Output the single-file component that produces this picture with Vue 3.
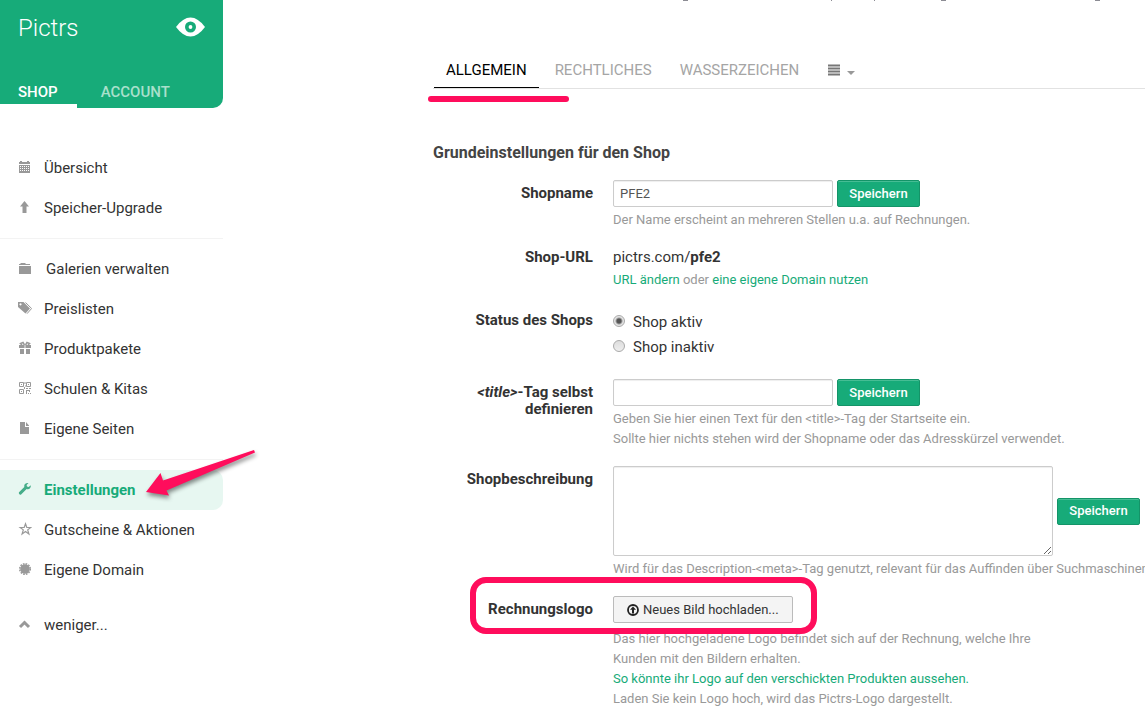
<script setup>
import { ref } from 'vue'

const groups = [
  [
    { icon: 'calendar', label: 'Übersicht' },
    { icon: 'up', label: 'Speicher-Upgrade' },
  ],
  [
    { icon: 'folder', label: 'Galerien verwalten', wide: true },
    { icon: 'tags', label: 'Preislisten' },
    { icon: 'gift', label: 'Produktpakete' },
    { icon: 'qr', label: 'Schulen & Kitas' },
    { icon: 'file', label: 'Eigene Seiten' },
  ],
  [
    { icon: 'wrench', label: 'Einstellungen', active: true },
    { icon: 'star', label: 'Gutscheine & Aktionen' },
    { icon: 'burst', label: 'Eigene Domain' },
  ],
]

const shopName = ref('PFE2')
const status = ref('aktiv')
const title = ref('')
const description = ref('')
</script>

<template>
  <div class="page">
    <aside class="sidebar">
      <header class="brand">
        <div class="brand-row">
          <a href="#" class="brand-name">Pictrs</a>
          <a href="#" class="brand-eye" aria-label="Shop ansehen">
            <svg width="30" height="20" viewBox="0 0 30 20">
              <path d="M0 10Q7 .5 14.500 .5T29 10Q22 19.500 14.500 19.500T0 10Z" fill="#fff" />
              <circle cx="14.500" cy="10" r="3.700" fill="none" stroke="#17ab79" stroke-width="3.600" />
            </svg>
          </a>
        </div>
        <nav class="brand-tabs">
          <a href="#" class="on">SHOP</a>
          <a href="#">ACCOUNT</a>
        </nav>
      </header>

      <nav class="menu">
        <ul v-for="(group, i) in groups" :key="i">
          <li v-for="item in group" :key="item.label">
            <a href="#" :class="{ active: item.active, wide: item.wide }">
              <svg class="icon" viewBox="0 0 14 14">
                <g v-if="item.icon === 'calendar'" fill="currentColor">
                  <path d="M1 2h1V1h2v1h5V1h2v1h1v2H1z" />
                  <path d="M1 5h11v8H1z" />
                  <path d="M2 6.500h9M2 8.500h9M2 10.500h9" stroke="#fff" stroke-dasharray="1 1" />
                </g>
                <path v-else-if="item.icon === 'up'" d="M6.500 1l4.500 5.500H8.500V13h-4V6.500H2z" fill="currentColor" />
                <g v-else-if="item.icon === 'folder'" fill="currentColor">
                  <path d="M2 3l1-1h4l1 1h4v1H1V3zM1 5h12v8H1z" />
                </g>
                <g v-else-if="item.icon === 'tags'">
                  <path d="M0 1h5.500L12 7.500 7.500 12.500 0 6zM2.500 2.200a1.100 1.100 0 1 0 .01 0z" fill="currentColor" fill-rule="evenodd" />
                  <path d="M7.500 1.500L13.600 7.500 9 12.700" fill="none" stroke="currentColor" />
                </g>
                <g v-else-if="item.icon === 'gift'">
                  <path d="M1 4h5v3H1zM8 4h5v3H8zM2 8h4v5H2zM8 8h4v5H8z" fill="currentColor" />
                  <path d="M6.500 4L5 1.500 2.500 2.500 4 4M7.500 4L9 1.500 11.500 2.500 10 4" fill="none" stroke="currentColor" stroke-width="1.500" />
                  <path d="M6 4h2v3H6z" fill="currentColor" opacity=".6" />
                </g>
                <g v-else-if="item.icon === 'qr'" fill="none" stroke="currentColor">
                  <path d="M1.500 1.500h4v4h-4zM8.500 1.500h4v4h-4zM1.500 8.500h4v4h-4z" />
                  <path d="M3 3.500h1M10 3.500h1M3 10.500h1M7 1v2M6.500 6v2M8 7.500h2M11 7.500h2M8 9.500h3M11.500 9v2M8.500 10v3M10 12.500h1M12 12.500h1M7 5h1" />
                </g>
                <g v-else-if="item.icon === 'file'" fill="currentColor">
                  <path d="M2 1h5v5h4v7H2z" /><path d="M8 1l3 3.500V5H8z" />
                </g>
                <path v-else-if="item.icon === 'wrench'" d="M12.700 3.200l-2 1.800-1.700-.5-.4-1.500 1.900-1.900C8.500.6 6.500 1.500 6.200 3.800L6.300 5 1 10.200c-.8 1 .9 3.200 2.100 2.200L8.600 7c2.600.8 4.700-1.200 4.100-3.800z" fill="currentColor" />
                <path v-else-if="item.icon === 'star'" d="M7.500 1.800l1.300 3.700h4L9.700 7.900l1.200 4L7.500 9.500l-3.400 2.400 1.200-4L2.200 5.500h4z" fill="none" stroke="currentColor" stroke-width="1.200" />
                <g v-else fill="currentColor">
                  <circle cx="7" cy="7" r="4.800" />
                  <circle cx="7" cy="7" r="5.300" fill="none" stroke="currentColor" stroke-width="1.500" stroke-dasharray="1.660 1.110" />
                </g>
              </svg>
              <span>{{ item.label }}</span>
            </a>
          </li>
        </ul>
        <button type="button" class="less">
          <svg class="icon" viewBox="0 0 14 14">
            <path d="M2 10L6.500 5.500 11 10" fill="none" stroke="currentColor" stroke-width="3" />
          </svg>
          <span>weniger...</span>
        </button>
      </nav>

      <svg class="arrow" width="120" height="60" viewBox="0 0 120 60" aria-hidden="true">
        <path d="M6 47L20.500 28 23 35.500 114 5 115 7.500 26.500 45.500 29 50.500Z" fill="#ff0d5c" />
      </svg>
    </aside>

    <main class="content">
      <svg class="cut-line" width="440" height="1" viewBox="0 0 440 1" aria-hidden="true">
        <path d="M10 .5h5M158 .5h1M201 .5h1M268 .5h5M422 .5h5" stroke="#8c8c94" />
      </svg>

      <nav class="tabs">
        <a href="#" class="on">ALLGEMEIN</a>
        <a href="#">RECHTLICHES</a>
        <a href="#">WASSERZEICHEN</a>
        <button type="button" class="more" aria-label="Weitere Bereiche">
          <svg width="28" height="14" viewBox="0 0 28 14">
            <path d="M0 2.500h12M0 5.500h12M0 8.500h12M0 11.500h12" stroke="#777" stroke-width="2" />
            <path d="M19 8h8l-4 4z" fill="#999" />
          </svg>
        </button>
        <i class="marker"></i>
      </nav>

      <form class="form" @submit.prevent>
        <h2>Grundeinstellungen für den Shop</h2>

        <div class="row">
          <label for="name">Shopname</label>
          <div>
            <div class="field">
              <input id="name" v-model="shopName" type="text">
              <button type="submit" class="save">Speichern</button>
            </div>
            <p class="help">Der Name erscheint an mehreren Stellen u.a. auf Rechnungen.</p>
          </div>
        </div>

        <div class="row url-row">
          <span class="label">Shop-URL</span>
          <div>
            <p class="url">pictrs.com/<b>pfe2</b></p>
            <p class="help"><a href="#">URL ändern</a> oder <a href="#">eine eigene Domain nutzen</a></p>
          </div>
        </div>

        <div class="row" role="radiogroup" aria-labelledby="status-label">
          <span id="status-label" class="label">Status des Shops</span>
          <div class="radios">
            <label><input v-model="status" type="radio" name="status" value="aktiv">Shop aktiv</label>
            <label><input v-model="status" type="radio" name="status" value="inaktiv">Shop inaktiv</label>
          </div>
        </div>

        <div class="row">
          <label for="title"><em>&lt;title&gt;</em>-Tag selbst definieren</label>
          <div>
            <div class="field">
              <input id="title" v-model="title" type="text">
              <button type="submit" class="save">Speichern</button>
            </div>
            <p class="help">
              Geben Sie hier einen Text für den &lt;title&gt;-Tag der Startseite ein.<br>
              Sollte hier nichts stehen wird der Shopname oder das Adresskürzel verwendet.
            </p>
          </div>
        </div>

        <div class="row">
          <label for="description">Shopbeschreibung</label>
          <div>
            <div class="field">
              <textarea id="description" v-model="description"></textarea>
              <button type="submit" class="save">Speichern</button>
            </div>
            <p class="help">Wird für das Description-&lt;meta&gt;-Tag genutzt, relevant für das Auffinden über Suchmaschinen, d</p>
          </div>
        </div>

        <div class="row logo-row">
          <span class="label">Rechnungslogo</span>
          <div>
            <button type="button" class="upload">
              <svg width="12" height="12" viewBox="0 0 12 12">
                <circle cx="6" cy="6" r="5" fill="none" stroke="#222" stroke-width="1.800" />
                <path d="M6 2.500l3 3.200H7V9.500H5V5.700H3z" fill="#222" />
              </svg>
              Neues Bild hochladen...
            </button>
            <p class="help">
              Das hier hochgeladene Logo befindet sich auf der Rechnung, welche Ihre<br>
              Kunden mit den Bildern erhalten.<br>
              <a href="#">So könnte ihr Logo auf den verschickten Produkten aussehen.</a><br>
              Laden Sie kein Logo hoch, wird das Pictrs-Logo dargestellt.
            </p>
          </div>
          <i class="frame"></i>
        </div>
      </form>
    </main>
  </div>
</template>

<style>
body {
  margin: 0;
  background: #fff;
}
</style>

<style scoped>
.page {
  display: grid;
  grid-template-columns: 223px minmax(0, 1fr);
  font: 15px/20px Roboto, "Liberation Sans", sans-serif;
  color: #333;
}
.page * {
  box-sizing: border-box;
}
a {
  color: inherit;
  text-decoration: none;
}
button {
  font: inherit;
  cursor: pointer;
}
p,
h2,
ul {
  margin: 0;
  padding: 0;
}
.sidebar {
  position: relative;
}
.brand {
  display: flex;
  flex-direction: column;
  justify-content: space-between;
  height: 108px;
  background: #17ab79;
  border-bottom-right-radius: 10px;
  color: #fff;
}
.brand-row {
  display: flex;
  align-items: center;
  justify-content: space-between;
  padding: 12px 17px 0 18px;
}
.brand-name {
  font-size: 24px;
  line-height: 32px;
  font-weight: 300;
}
.brand-eye {
  display: flex;
  margin-top: -2px;
}
.brand-tabs {
  display: flex;
  gap: 6px;
  font-weight: 500;
}
.brand-tabs a {
  padding: 0 18px 2px;
  border-bottom: 4px solid transparent;
  color: #a9e0cc;
}
.brand-tabs .on {
  padding-right: 19px;
  border-color: #fff;
  color: #fff;
}
.menu {
  padding-top: 40px;
}
.menu ul {
  list-style: none;
}
.menu ul + ul {
  margin-top: 10px;
  padding-top: 10px;
  border-top: 1px solid #f3f3f3;
}
.menu a,
.less {
  display: flex;
  align-items: center;
  gap: 12px;
  width: 100%;
  height: 40px;
  padding: 0 18px;
  color: #333;
}
.menu a.wide {
  gap: 14px;
}
.menu a.active {
  border-radius: 0 10px 10px 0;
  background: #e7f7f1;
  color: #17ab79;
  font-weight: 700;
}
.icon {
  flex: none;
  width: 14px;
  height: 14px;
  margin-bottom: 2px;
  color: #999;
}
.active .icon {
  color: #45ad89;
}
.less {
  margin-top: 15px;
  border: 0;
  background: none;
}
.arrow {
  position: absolute;
  left: 140px;
  top: 445px;
  filter: drop-shadow(1px 3px 2px rgba(0, 0, 0, 0.45));
}
.content {
  padding-left: 210px;
  overflow: hidden;
}
.cut-line {
  display: block;
  margin-left: 240px;
}
.tabs {
  position: relative;
  display: flex;
  gap: 4px;
  margin-top: 51px;
  padding-left: 1px;
  border-bottom: 1px solid #e2e2e2;
}
.tabs a {
  height: 36px;
  padding: 8px 12px;
  color: #a5a5a5;
}
.tabs .on {
  border-bottom: 1px solid #000;
  color: #000;
}
.more {
  display: flex;
  align-items: center;
  padding: 0 13px;
  border: 0;
  background: none;
}
.marker {
  position: absolute;
  left: -5px;
  top: 44px;
  width: 141px;
  height: 6px;
  border-radius: 3px;
  background: #ff0d5c;
}
h2 {
  margin: 54px 0 17px;
  font-size: 16px;
  line-height: 20px;
  font-weight: 700;
  color: #444;
}
.row {
  position: relative;
  display: grid;
  grid-template-columns: 160px max-content;
  gap: 20px;
  margin-bottom: 17px;
}
.row > label,
.row > .label {
  padding-top: 5px;
  line-height: 17px;
  font-weight: 700;
  text-align: right;
}
.url-row {
  margin-top: -3px;
}
.url {
  padding-top: 1px;
  line-height: 25px;
}
.url b {
  font-weight: 700;
}
.field {
  display: flex;
  align-items: center;
  gap: 4px;
}
input[type="text"],
textarea {
  display: block;
  width: 220px;
  height: 27px;
  margin: 0;
  padding: 0 6px;
  border: 1px solid #ccc;
  border-radius: 2px;
  background: #fff;
  box-shadow: inset 0 1px 1px #eee;
  font: inherit;
  font-size: 13px;
  color: #555;
}
textarea {
  width: 440px;
  height: 90px;
}
.save {
  width: 83px;
  height: 27px;
  padding: 0;
  border: 1px solid #149468;
  border-radius: 2px;
  background: #17ab79;
  box-shadow: inset 0 1px 0 #46bd94;
  font-size: 13px;
  font-weight: 500;
  color: #fff;
}
.help {
  padding-top: 3px;
  font-size: 13px;
  color: #999;
  white-space: nowrap;
}
.url-row .help {
  padding-top: 0;
}
.help a {
  color: #17ab79;
}
.radios {
  padding: 2px 0 3px;
}
.radios label {
  display: flex;
  align-items: center;
  gap: 8px;
  height: 25px;
}
.radios input {
  appearance: none;
  width: 12px;
  height: 12px;
  margin: 0 0 1px;
  border: 1px solid #aaa;
  border-radius: 50%;
  background: linear-gradient(#ddd, #eee);
}
.radios input:checked {
  background: radial-gradient(circle, #555 0 2px, #e4e4e4 4px);
}
.upload {
  display: flex;
  align-items: center;
  gap: 4px;
  height: 27px;
  padding: 0 13px;
  border: 1px solid #bbb;
  border-radius: 2px;
  background: #f4f4f4;
  font-size: 13px;
  color: #333;
}
.logo-row {
  margin-bottom: 0;
}
.logo-row .help {
  padding-top: 6px;
}
.frame {
  position: absolute;
  left: 37px;
  top: -19px;
  width: 347px;
  height: 57px;
  border: 6px solid #ff0d5c;
  border-radius: 16px;
  pointer-events: none;
}
</style>
